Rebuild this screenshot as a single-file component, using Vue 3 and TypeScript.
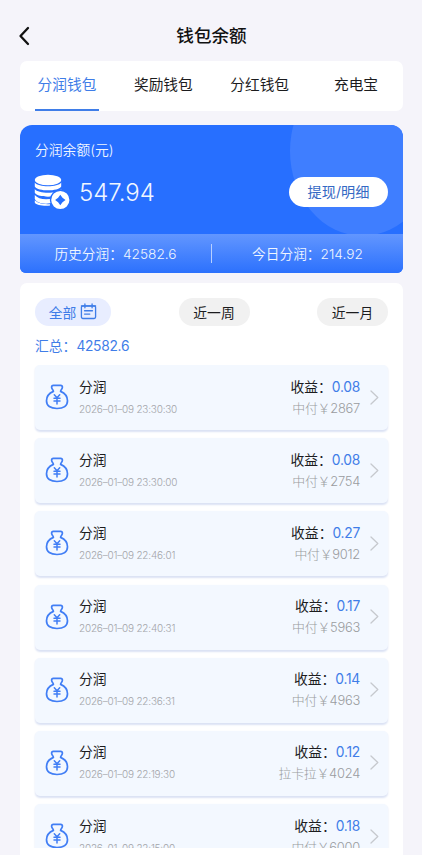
<script setup lang="ts">
interface Entry {
  time: string
  amount: string
  source: string
}

const tabs: string[] = ['分润钱包', '奖励钱包', '分红钱包', '充电宝']

const entries: Entry[] = [
  { time: '2026–01–09 23:30:30', amount: '0.08', source: '中付￥2867' },
  { time: '2026–01–09 23:30:00', amount: '0.08', source: '中付￥2754' },
  { time: '2026–01–09 22:46:01', amount: '0.27', source: '中付￥9012' },
  { time: '2026–01–09 22:40:31', amount: '0.17', source: '中付￥5963' },
  { time: '2026–01–09 22:36:31', amount: '0.14', source: '中付￥4963' },
  { time: '2026–01–09 22:19:30', amount: '0.12', source: '拉卡拉￥4024' },
  { time: '2026–01–09 22:15:00', amount: '0.18', source: '中付￥6000' },
]
</script>

<template>
  <main class="page">
    <header class="header">
      <svg class="back" viewBox="0 0 12 20"><path d="M10 2 2.5 10 10 18" /></svg>
      <h1>钱包余额</h1>
    </header>

    <nav class="tabs">
      <div v-for="(tab, i) in tabs" :key="tab" class="tab" :class="{ active: i === 0 }">
        <span>{{ tab }}</span>
      </div>
    </nav>

    <section class="wallet">
      <div class="bubble"></div>
      <div class="wallet-label">分润余额(元)</div>
      <div class="balance">
        <svg class="coins" viewBox="0 0 36 36">
          <ellipse cx="14" cy="6" rx="13.2" ry="5.2" />
          <path d="M.8 8.6C4 13.6 24 13.6 27.2 8.6V12.4C24 17.6 4 17.6 .8 12.4Z" />
          <path d="M.8 15C4 20 24 20 27.2 15V18.8C24 24 4 24 .8 18.8Z" />
          <path d="M.8 21.4C4 25.6 11 26.4 20 24.8V29C10 31.4 3 29.4 .8 25.4Z" transform="translate(0 -.4)" />
          <path d="M.8 27C4 30 9 31 16 31V32.4C9 33 2.4 32 .8 29.6Z" transform="translate(0 -.8)" />
          <circle cx="26.3" cy="26" r="9.8" class="ring" />
          <path d="M26.3 20.8 28.5 23.8 31.5 26 28.5 28.2 26.3 31.2 24.1 28.2 21.1 26 24.1 23.8Z" class="hole" />
        </svg>
        <span class="balance-value">547.94</span>
        <button class="withdraw">提现/明细</button>
      </div>
      <div class="totals">
        <div class="total">历史分润：<span>42582.6</span></div>
        <div class="rule"></div>
        <div class="total">今日分润：<span>214.92</span></div>
      </div>
    </section>

    <section class="records">
      <div class="filters">
        <button class="filter on">
          全部
          <svg class="calendar" viewBox="0 0 18 18">
            <rect x="1.5" y="3" width="15" height="13.4" rx="1.5" />
            <path d="M1.5 3.2H16.5M5.2 1V5M12.8 1V5M4.8 8.2H13.2M4.8 11.7H10.4" />
          </svg>
        </button>
        <button class="filter">近一周</button>
        <button class="filter">近一月</button>
      </div>
      <div class="summary">汇总：<span>42582.6</span></div>
      <div class="list">
        <article v-for="entry in entries" :key="entry.time" class="entry">
          <svg class="bag" viewBox="0 0 24 26">
            <path d="M8.4 7.4C8.4 5.6 6.6 5.2 6.6 3.2 6.6 1.9 7.2 1.3 8.4 1.3H15.6C16.8 1.3 17.4 1.9 17.4 3.2 17.4 5.2 15.6 5.6 15.6 7.4 19.8 9.2 22.5 12.8 22.5 16.8 22.5 21.9 18.6 24.5 12 24.5S1.5 21.9 1.5 16.8C1.5 12.8 4.2 9.2 8.4 7.4Z" />
            <path d="M9.3 10.8 12 13.8 14.7 10.8M12 14V20M9 14.2H15M9 16.9H15" class="yen" />
          </svg>
          <div class="kind">
            <div class="name">分润</div>
            <div class="time">{{ entry.time }}</div>
          </div>
          <div class="gain">
            <div class="name">收益：<span>{{ entry.amount }}</span></div>
            <div class="source">{{ entry.source }}</div>
          </div>
          <svg class="chevron" viewBox="0 0 9 15"><path d="M1 1 7.8 7.5 1 14" /></svg>
        </article>
      </div>
    </section>
  </main>
</template>

<style>
body {
  margin: 0;
  background: #f5f4fa;
}
</style>

<style scoped>
* {
  box-sizing: border-box;
}
.page {
  width: 422px;
  height: 855px;
  padding: 0 19px 0 20px;
  overflow: hidden;
  display: flex;
  flex-direction: column;
  background: #f5f4fa;
  color: #1c1c1e;
  font-family: Inter, "Noto Sans CJK SC", sans-serif;
}
svg {
  fill: none;
  stroke-linecap: round;
  stroke-linejoin: round;
  flex: none;
}
button {
  border: 0;
  padding: 0;
  font-family: inherit;
}
.header {
  height: 61px;
  padding-top: 11px;
  display: grid;
  grid-template-columns: 20px 1fr 20px;
  align-items: center;
}
.back {
  width: 12px;
  height: 20px;
  margin-left: -2px;
  stroke: #111;
  stroke-width: 2.3;
}
h1 {
  margin: 0;
  font-size: 17.6px;
  line-height: 26px;
  font-weight: 500;
  text-align: center;
  color: #111;
}
.tabs {
  height: 50px;
  flex: none;
  padding: 0 15px;
  display: flex;
  justify-content: space-between;
  background: #fff;
  border-radius: 7px;
}
.tab {
  width: 64px;
  display: flex;
  justify-content: center;
  padding-top: 12px;
  font-size: 14.7px;
  line-height: 24px;
  white-space: nowrap;
}
.tab.active {
  color: #3f7de8;
  border-bottom: 2px solid #3f7de8;
}
.wallet {
  position: relative;
  height: 148px;
  flex: none;
  margin-top: 14px;
  overflow: hidden;
  display: flex;
  flex-direction: column;
  border-radius: 12px 12px 6px 6px;
  background: #276fff;
  color: #f0f6ff;
}
.bubble {
  position: absolute;
  left: 270px;
  top: -59px;
  width: 145px;
  height: 170px;
  border-radius: 50%;
  background: #3f7eff;
}
.wallet-label {
  position: relative;
  padding: 14px 15px 0;
  font-size: 13.8px;
  line-height: 22px;
  font-weight: 350;
}
.balance {
  position: relative;
  flex: 1;
  display: flex;
  align-items: center;
  padding: 0 15px 11px 14px;
}
.coins {
  width: 36px;
  height: 36px;
  fill: #fff;
}
.coins .ring {
  stroke: #276fff;
  stroke-width: 1.4;
}
.coins .hole {
  fill: #276fff;
}
.balance-value {
  flex: 1;
  margin-left: 9px;
  padding-top: 1px;
  font-size: 24px;
  line-height: 30px;
  font-weight: 350;
}
.withdraw {
  width: 99px;
  height: 30px;
  padding-bottom: 2px;
  border-radius: 15px;
  background: #fff;
  color: #3569c4;
  font-size: 14.2px;
}
.totals {
  position: relative;
  height: 39px;
  display: grid;
  grid-template-columns: 1fr 1px 1fr;
  align-items: center;
  text-align: center;
  font-size: 13.7px;
  font-weight: 350;
  background: linear-gradient(#6296ff, #2c71fd);
}
.total {
  padding-bottom: 2px;
}
.rule {
  height: 19px;
  background: #b8d0ff;
}
.records {
  flex: 1;
  min-height: 0;
  margin-top: 10px;
  padding: 15px 15px 7px;
  display: flex;
  flex-direction: column;
  background: #fff;
  border-radius: 7px 7px 0 0;
}
.filters {
  display: flex;
  justify-content: space-between;
}
.filter {
  display: flex;
  align-items: center;
  justify-content: center;
  gap: 4px;
  width: 71px;
  height: 28px;
  padding-bottom: 1px;
  border-radius: 14px;
  background: #f1f1f1;
  color: #1c1c1e;
  font-size: 13.8px;
}
.filter.on {
  width: 76px;
  background: #e8edff;
  color: #3f7de8;
}
.calendar {
  width: 17px;
  height: 17px;
  stroke: #3f7de8;
  stroke-width: 1.4;
}
.summary {
  margin-top: 9px;
  font-size: 13.8px;
  line-height: 22px;
  color: #3f7de8;
}
.summary span {
  letter-spacing: -.3px;
}
.list {
  flex: 1;
  min-height: 0;
  margin: 8px -4px 0;
  padding: 0 4px;
  display: flex;
  flex-direction: column;
  gap: 8.2px;
  overflow: hidden;
}
.entry {
  height: 65px;
  flex: none;
  padding: 0 9px 0 10px;
  display: flex;
  align-items: center;
  border-radius: 5px;
  background: #f3f8ff;
  box-shadow: 0 1.5px 2px #dbe2f4;
}
.bag {
  width: 24px;
  height: 26px;
  margin-bottom: 1px;
  stroke: #417ef5;
  stroke-width: 1.7;
}
.bag .yen {
  stroke-width: 1.5;
}
.kind {
  flex: 1;
  margin-left: 10px;
}
.name {
  font-size: 13.8px;
  line-height: 22px;
}
.name span {
  color: #3f7de8;
  letter-spacing: -.25px;
}
.time {
  font-size: 10px;
  line-height: 22px;
  font-weight: 300;
  letter-spacing: -.2px;
  color: #a3a5aa;
}
.gain {
  text-align: right;
}
.source {
  font-size: 12.9px;
  line-height: 22px;
  font-weight: 300;
  letter-spacing: -.25px;
  color: #9a9ca0;
}
.chevron {
  width: 9px;
  height: 15px;
  margin-left: 10px;
  margin-bottom: 1px;
  stroke: #c6c9ce;
  stroke-width: 1.3;
}
</style>
